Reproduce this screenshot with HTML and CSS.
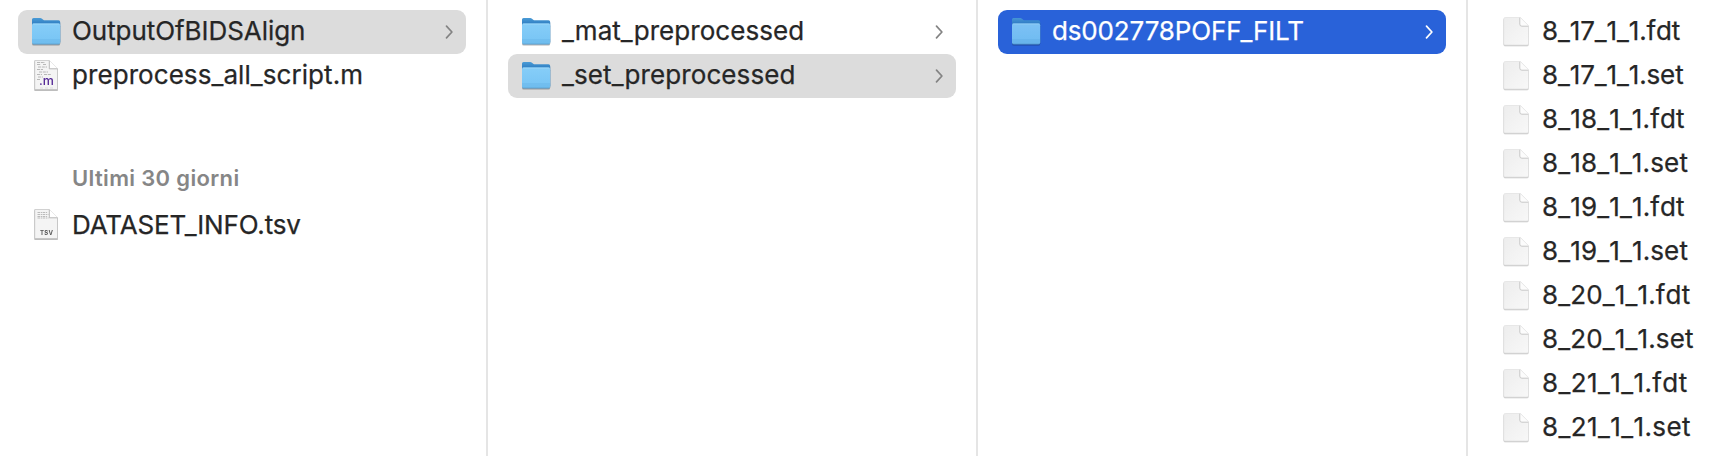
FILE: index.html
```html
<!DOCTYPE html>
<html lang="it">
<head>
<meta charset="utf-8">
<title>Finder</title>
<link rel="stylesheet" href="styles.css">
</head>
<body>
<svg class="defs" width="0" height="0" aria-hidden="true">
  <defs>
    <linearGradient id="back" x1="0" y1="0" x2="0" y2="1"><stop offset="0" stop-color="#4a9bd6"/><stop offset=".25" stop-color="#2f7ec2"/></linearGradient>
    <linearGradient id="front" x1="0" y1="0" x2="0" y2="1"><stop offset="0" stop-color="#86cdf8"/><stop offset="1" stop-color="#76c4f4"/></linearGradient>
    <linearGradient id="paper" x1="0" y1="0" x2="1" y2="1"><stop offset="0" stop-color="#ededed"/><stop offset="1" stop-color="#f8f8f8"/></linearGradient>
    <symbol id="folder" viewBox="0 0 32 32">
      <path d="M2 3.500q0-1.500 1.500-1.500h6.700q1 0 1.800.7l1.200 1q.7.600 1.700.600H28.500q1.700 0 1.700 1.700V26H2z" fill="url(#back)"/>
      <path d="M2 9.200q0-1.700 1.700-1.700h24.800q1.700 0 1.700 1.700v17.300q0 1.800-1.700 1.800H3.700Q2 28.300 2 26.500z" fill="url(#front)"/>
      <path d="M2.600 8h27" stroke="#a3daf9" stroke-width=".8"/>
      <path d="M2 24h28.200M2 26h28.200" stroke="#5fade0" stroke-width=".6"/>
      <path d="M2.500 28h27.200" stroke="#4b91c2" stroke-width=".7"/>
    </symbol>
    <symbol id="blank" viewBox="0 0 32 32">
      <path d="M3.700 3q0-1.500 1.500-1.500h15.300l8 8V27.500q0 1.500-1.500 1.500H5.200q-1.500 0-1.500-1.500z" fill="url(#paper)" stroke="#dedede" stroke-width=".6"/>
      <path d="M20 1.700v6.300q0 2 2 2h6.400z" fill="#fcfcfc"/>
      <path d="M19.800 1.700v6.500q0 2 2 2h6.500" fill="none" stroke="#c8c8c8" stroke-width="1"/>
    </symbol>
    <symbol id="sheet" viewBox="0 0 32 32">
      <path d="M4.700.5h14.800l8 8V29.500H4.700z" fill="#f4f4f4" stroke="#c0c0c0" stroke-width=".7"/>
      <path d="M19.500.5v8h8z" fill="#fff"/>
      <path d="M19.300.8v8h8" fill="none" stroke="#b0b0b0" stroke-width=".9"/>
    </symbol>
    <symbol id="chevron" viewBox="0 0 10 16">
      <path d="M2.500 2.200 7.900 8 2.500 13.800" fill="none" stroke="currentColor" stroke-width="1.700" stroke-linecap="round" stroke-linejoin="round"/>
    </symbol>
  </defs>
</svg>
<main class="browser">
  <section class="column first">
    <div class="row selected"><svg class="icon"><use href="#folder"/></svg><span class="name n-output">OutputOfBIDSAlign</span><svg class="chevron"><use href="#chevron"/></svg></div>
    <div class="row"><svg class="icon file" viewBox="0 0 32 32"><use href="#sheet"/><path d="M7 2.500h8M7 4.500h4M13 4.500h3M8 7h9M7 9.500h6M9 12h9M7 14.500h5M14 14.500h7M8 17h5M7 19.500h3" stroke="#a8a8a8" stroke-width=".8" stroke-dasharray="3 .8"/><path d="M10 28h3m2 0h3m2 0h3" stroke="#d4d4d4" stroke-width=".7"/><text class="m-label" x="9" y="25">.m</text></svg><span class="name n-script">preprocess_all_script.m</span></div>
    <h2 class="group">Ultimi 30 giorni</h2>
    <div class="row"><svg class="icon file" viewBox="0 0 32 32"><use href="#sheet"/><path d="M7.500 3.500h10M7.500 5.500h11M7.500 7.500h10M7.500 9h11" stroke="#b4b4b4" stroke-width=".9" stroke-dasharray="2.500 .7 1.300 .6"/><text class="tsv-label" x="10" y="26.400">TSV</text></svg><span class="name n-dataset">DATASET_INFO.tsv</span></div>
  </section>
  <section class="column">
    <div class="row"><svg class="icon"><use href="#folder"/></svg><span class="name n-mat">_mat_preprocessed</span><svg class="chevron"><use href="#chevron"/></svg></div>
    <div class="row selected"><svg class="icon"><use href="#folder"/></svg><span class="name n-set">_set_preprocessed</span><svg class="chevron"><use href="#chevron"/></svg></div>
  </section>
  <section class="column">
    <div class="row active"><svg class="icon"><use href="#folder"/></svg><span class="name n-ds">ds002778POFF_FILT</span><svg class="chevron"><use href="#chevron"/></svg></div>
  </section>
  <section class="column files">
    <div class="row"><svg class="icon"><use href="#blank"/></svg><span class="name n-17">8_17_1_1.fdt</span></div>
    <div class="row"><svg class="icon"><use href="#blank"/></svg><span class="name n-17">8_17_1_1.set</span></div>
    <div class="row"><svg class="icon"><use href="#blank"/></svg><span class="name">8_18_1_1.fdt</span></div>
    <div class="row"><svg class="icon"><use href="#blank"/></svg><span class="name">8_18_1_1.set</span></div>
    <div class="row"><svg class="icon"><use href="#blank"/></svg><span class="name">8_19_1_1.fdt</span></div>
    <div class="row"><svg class="icon"><use href="#blank"/></svg><span class="name">8_19_1_1.set</span></div>
    <div class="row"><svg class="icon"><use href="#blank"/></svg><span class="name">8_20_1_1.fdt</span></div>
    <div class="row"><svg class="icon"><use href="#blank"/></svg><span class="name">8_20_1_1.set</span></div>
    <div class="row"><svg class="icon"><use href="#blank"/></svg><span class="name n-21">8_21_1_1.fdt</span></div>
    <div class="row"><svg class="icon"><use href="#blank"/></svg><span class="name n-21">8_21_1_1.set</span></div>
  </section>
</main>
</body>
</html>
```
FILE: styles.css
```css
* { box-sizing: border-box; }
body { margin: 0; background: #fff; overflow: hidden; font-family: Inter, "Liberation Sans", sans-serif; }
.defs { display: block; }
.browser { display: flex; height: 456px; }
.column { flex: 0 0 490px; padding: 10px 20px 0; border-right: 2px solid #e5e5e5; }
.column.first { flex-basis: 488px; padding-left: 18px; }
.column.files { flex: 1 0 0; padding-right: 0; border-right: 0; }
.row { display: flex; align-items: center; height: 44px; padding: 0 12px; border-radius: 9px; color: #262626; font-size: 26px; }
.selected { background: #dcdcdc; }
.active { background: #2962d9; color: #fff; }
.icon { flex: none; width: 32px; height: 32px; margin-right: 10px; filter: drop-shadow(0 1px .6px rgba(0, 0, 0, .3)); }
.files .icon { filter: drop-shadow(0 1px .6px rgba(0, 0, 0, .2)); }
.active .icon { opacity: .9; }
.name { flex: 1; height: 44px; white-space: nowrap; line-height: 42px; -webkit-text-stroke: .25px currentColor; }
.n-output { letter-spacing: -.06px; }
.n-script { letter-spacing: .07px; }
.n-dataset { line-height: 44px; letter-spacing: -.15px; }
.n-mat { letter-spacing: .06px; }
.n-set { letter-spacing: .1px; }
.n-ds { letter-spacing: -.15px; }
.files .name { font-kerning: none; letter-spacing: .14px; }
.files .n-17 { letter-spacing: -.12px; }
.files .n-21 { letter-spacing: .4px; }
.chevron { flex: none; width: 10px; height: 16px; color: #838383; }
.active .chevron { color: #fff; }
.group { margin: 57px 0 0; padding-left: 54px; height: 48px; color: #868686; font-size: 22px; font-weight: 600; line-height: 46px; letter-spacing: .34px; }
.m-label { font-size: 12.500px; font-weight: 500; fill: #542896; }
.tsv-label { font-size: 6px; font-weight: 700; fill: #555; letter-spacing: .3px; }
```
